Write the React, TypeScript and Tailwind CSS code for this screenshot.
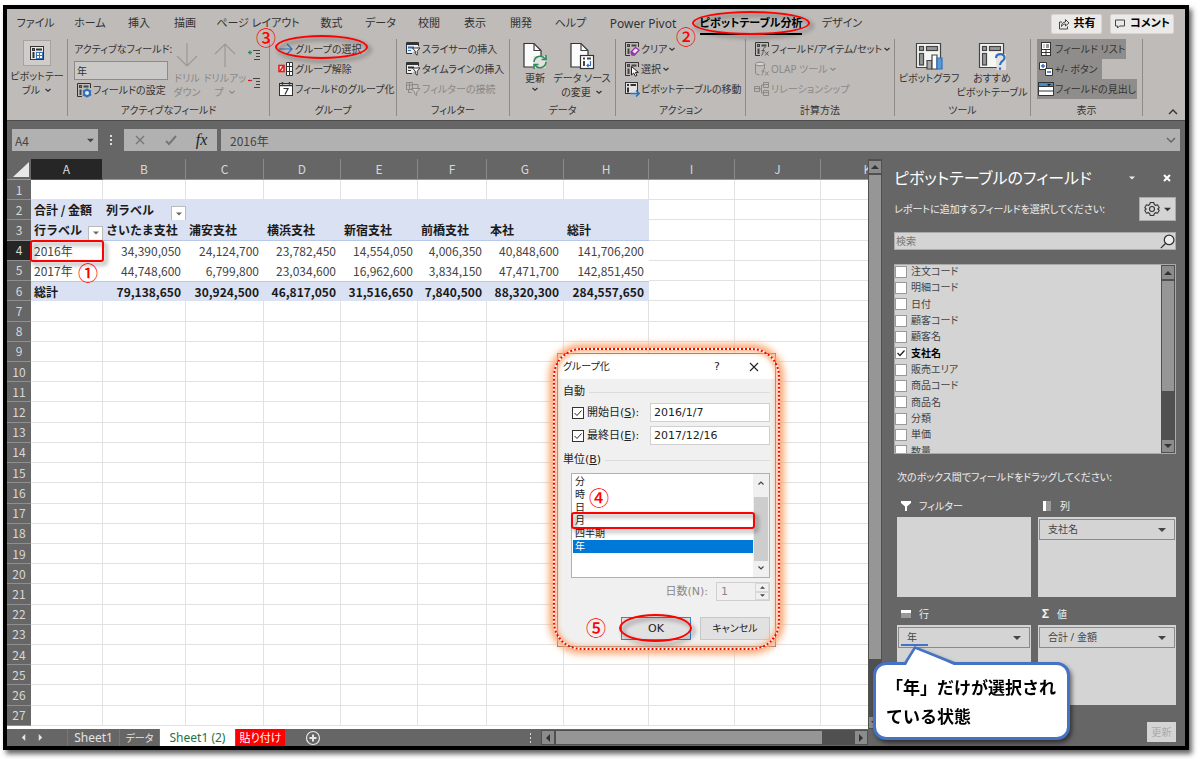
import type { ReactNode } from "react";

const UI = "font-['Noto_Sans','Noto_Sans_CJK_JP',sans-serif] [font-feature-settings:'palt']";
const CJK = "font-['Noto_Sans_CJK_JP',sans-serif] [font-feature-settings:normal]";

/* ---------- small drawings ---------- */

function Chevron({ className = "" }: { className?: string }) {
  return (
    <svg viewBox="0 0 8 8" className={`inline-block h-2 w-2 shrink-0 ${className}`} fill="none" stroke="currentColor" strokeWidth="1.2">
      <path d="M1.5 3 4 5.3 6.5 3" />
    </svg>
  );
}

function Tri({ dir = "down", className = "h-2 w-2" }: { dir?: "down" | "up" | "left" | "right"; className?: string }) {
  const d = { down: "M0 2h8L4 6z", up: "M0 6h8L4 2z", left: "M6 0v8L2 4z", right: "M2 0v8l4-4z" }[dir];
  return (
    <svg viewBox="0 0 8 8" className={`shrink-0 ${className}`} fill="currentColor">
      <path d={d} />
    </svg>
  );
}

function Ico({ children, className = "h-4 w-4" }: { children: ReactNode; className?: string }) {
  return (
    <svg viewBox="0 0 16 16" className={`shrink-0 ${className}`} fill="none" stroke="#333" strokeWidth="1">
      {children}
    </svg>
  );
}

const tableBase = (
  <>
    <path d="M14.5 6V1.5h-13v13H6" fill="none" />
    <rect x="3.5" y="3.5" width="2" height="2" fill="#777" stroke="#444" />
    <path d="M7.5 4.5h5" stroke="#444" strokeWidth="2" />
    <path d="M4.5 7.5v5.5" stroke="#444" strokeWidth="2" />
  </>
);

const IconPivot = ({ className }: { className?: string }) => (
  <Ico className={className}>
    <rect x="1.5" y="1.5" width="13" height="13" fill="#e8e8e8" />
    <rect x="3.5" y="3.5" width="2" height="2" fill="#777" />
    <path d="M7 4.5h6" strokeWidth="2" />
    <path d="M4.5 7v6" strokeWidth="2" />
    <rect x="7.5" y="7.5" width="6" height="6" fill="#fff" stroke="#3a74b8" />
    <path d="M7.5 10.5h6M10.5 7.5v6" stroke="#3a74b8" />
  </Ico>
);
const IconSettings = () => (
  <Ico>
    {tableBase}
    <circle cx="11" cy="11" r="3" stroke="#2f6fbd" strokeWidth="2" fill="#dfe9f5" />
    <path d="M11 6.5v2M11 13.5v2M6.8 8.7l1.8 1M13.4 12.3l1.8 1M6.8 13.3l1.8-1M13.4 9.7l1.8-1" stroke="#2f6fbd" strokeWidth="1.4" />
  </Ico>
);
const IconArrowRight = () => (
  <Ico>
    <path d="M1 8h13M9 3l5 5-5 5" stroke="#2f6fbd" strokeWidth="1.2" />
  </Ico>
);
const IconUngroup = () => (
  <Ico>
    <rect x="1" y="4.5" width="5" height="6" fill="#fff" stroke="#e02020" strokeWidth="1.6" />
    <path d="M2 10 5.500 5" stroke="#e02020" strokeWidth="1.6" />
    <path d="M8.500 1.500h6v13h-6z" fill="#fff" />
    <path d="M8.500 5.500h6M8.500 10.500h6M11.500 1.500v13" />
  </Ico>
);
const IconCalendar = () => (
  <Ico>
    <rect x="1.5" y="2.5" width="13" height="12" fill="#fff" />
    <path d="M1.5 4.5h13M4.5 1v2.5M11.5 1v2.5" strokeWidth="1.4" />
    <path d="M5.5 7.5h4.5l-3 6" strokeWidth="1.2" />
  </Ico>
);
const IconSlicer = ({ blue = false }: { blue?: boolean }) => (
  <Ico>
    <path d="M13.5 5V1.5h-12v11H7" fill="#eee" />
    <path d="M1.5 3h12" strokeWidth="2" />
    <path d="M3 6.5h6" stroke={blue ? "#2f6fbd" : "#333"} strokeWidth="2" />
    <path d="M3 9.5h3" stroke={blue ? "#2f6fbd" : "#333"} />
    <path d="M7.5 7h7.5l-2.8 3.2v4l-1.9-1.4v-2.6z" fill="#fff" />
  </Ico>
);
const IconFilterLink = () => (
  <Ico>
    <g stroke="#8b8886">
      <path d="M1.500 1.500h6v7h-6zM1.500 4h6M4.500 1.500v7M7.500 3.500h5.500v4" />
      <path d="M3.500 8.500v3h3" />
      <path d="M6.500 7.500h8.500l-3.300 3.500v3.500l-2-1.400V11z" fill="#cbc8c5" />
    </g>
  </Ico>
);
const IconDoc = ({ kind }: { kind: "refresh" | "source" }) => (
  <svg viewBox="0 0 28 28" className="h-7 w-7" fill="none" stroke="#444" strokeWidth="1.2">
    <path d="M3 1.5h10l7 7V25H3z" fill="#fbfbfb" stroke="#333" />
    <path d="M13 1.5v7h7" />
    {kind === "refresh" ? (
      <g stroke="#2e8b57" strokeWidth="1.6">
        <rect x="12.5" y="14" width="12" height="12" fill="#e4e2e0" stroke="none" />
        <path d="M13 20a6 6 0 0 1 11-3M25 20a6 6 0 0 1-11 3" />
        <path d="M25 13v4.5h-4.5M13 27v-4.5h4.5" />
      </g>
    ) : (
      <g>
        <rect x="12.5" y="13.5" width="13" height="13" fill="#fff" stroke="#333" />
        <path d="M15 16.5h2M19 16.5h4M16 19v5" strokeWidth="2" />
        <path d="M22.5 19v4.5H19M20.5 21.8 19 23.5l1.5 1.7" stroke="#2f6fbd" />
      </g>
    )}
  </svg>
);
const IconClear = () => (
  <Ico>
    {tableBase}
    <path d="m7 11 4.5-4.5L15 9l-4.5 5H8z" fill="#f3e6f7" stroke="#9030a8" strokeWidth="1.3" />
    <path d="m7.5 11 3 2.5" stroke="#9030a8" strokeWidth="2" />
  </Ico>
);
const IconSelect = () => (
  <Ico>
    {tableBase}
    <path d="M7.5 5.5v8.5l2.2-2 1.6 3.2 1.6-.8-1.5-3h3z" fill="#fff" stroke="#222" />
  </Ico>
);
const IconMove = () => (
  <Ico>
    <rect x="1.500" y="1.500" width="12" height="11" fill="#e4e4e4" />
    <path d="M3 4h2M6.500 4h5.500M4 6.500v5" strokeWidth="2" />
    <path d="M6 12.500h9M12 9.500l3 3-3 3" stroke="#2f6fbd" strokeWidth="1.600" />
  </Ico>
);
const IconFieldFx = () => (
  <Ico>
    {tableBase}
    <path d="M11.500 6.500c-2-.5-1.800 1.500-2.300 4s-.7 4-2 3.700M7.500 9.500h3.200M11 10.500l3.500 4M14.500 10.500l-3.500 4" stroke="#555" />
  </Ico>
);
const IconOlap = () => (
  <Ico>
    <g stroke="#8b8886">
      <ellipse cx="6" cy="3" rx="4.500" ry="1.800" fill="#d8d5d2" />
      <path d="M1.500 3v9c0 1 2 1.800 4 1.800M10.500 3v4" />
      <path d="M11 7.500c-2-.3-1.500 1.500-2 3.500s-.8 3.500-2 3.200M7.500 10h3M11 10.500l3.500 4M14.500 10.500l-3.500 4" />
    </g>
  </Ico>
);
const IconRelation = () => (
  <Ico>
    <path d="M.500 5.500h5v5h-5zM9.500 1.500h5v5h-5zM9.500 9.500h5v5h-5zM5.500 8h2V4h2M7.500 8v4h2M.5 7.500h5M9.500 3.500h5M9.500 11.500h5" stroke="#8b8886" />
  </Ico>
);
const IconChart = ({ kind }: { kind: "bars" | "question" }) => (
  <svg viewBox="0 0 28 28" className="h-7 w-7" fill="none" stroke="#444" strokeWidth="1.2">
    <path d="M1.500 1.500h24v24h-24z" fill="#f4f6f4" />
    <rect x="4.500" y="4.500" width="4" height="4" fill="#999" />
    <rect x="11.500" y="4.500" width="11" height="4" fill="#999" />
    <rect x="4.500" y="11.500" width="4" height="11.500" fill="#999" />
    {kind === "bars" ? (
      <g>
        <path d="M12 18.500h5V27h-5z" fill="#aaa" />
        <path d="M17 13h5v14h-5z" fill="#fff" />
        <path d="M22 16h5v11h-5z" fill="#5b9bd5" stroke="#2f6fbd" />
      </g>
    ) : (
      <g>
        <path d="M17 12h11v16H19z" fill="#e4e2e0" stroke="none" />
        <path d="M18 16c0-5.500 9-5 8.500 0-.3 3.500-4.500 3-4.500 7M22 25.500v2.300" stroke="#2f6fbd" strokeWidth="2.200" />
      </g>
    )}
  </svg>
);
const IconFieldList = () => (
  <Ico>
    <rect x="3.500" y="1.500" width="9" height="13" fill="#fff" />
    <path d="M5.500 4h1M8 4h3M5.500 6h1M8 6h3M3.500 8.500h9M3.500 11.500h9M8 8.500v6" />
  </Ico>
);
const IconPlusMinus = () => (
  <Ico>
    <path d="M1.500 1.500h7v7h-7z" fill="#fff" />
    <path d="M7.500 7.500h7v7h-7z" fill="#fff" />
    <path d="M3 5h4M5 3v4M9 11h4" stroke="#2f6fbd" strokeWidth="1.400" />
  </Ico>
);
const IconHeaders = () => (
  <Ico>
    <path d="M.500 1.500h15v13H.5z" fill="#fff" />
    <path d="M.500 1.500h15v4H.5z" fill="#3f8ed0" />
    <path d="M.500 10h15" />
    <path d="M9 3h4l-2 2z" fill="#111" stroke="none" />
  </Ico>
);
const IconLevel = ({ plus }: { plus?: boolean }) => (
  <Ico>
    <path d={plus ? "M1 5.500h4M3 3.500v4" : "M1 5.500h4"} stroke={plus ? "#2e8b57" : "#d02020"} strokeWidth="1.300" />
    <path d="M6 3.500h7M9 6.500h4M9 9.500h4M7 12.500h6" stroke="#444" />
  </Ico>
);
const IconDrill = ({ up }: { up?: boolean }) => (
  <svg viewBox="0 0 24 26" className="mb-0.5 h-[26px] w-6" fill="none" stroke="#9b9895" strokeWidth="1.200">
    <path d={up ? "M12 25V2M2 12 12 2l10 10" : "M12 1v23M2 14l10 10 10-10"} />
  </svg>
);

/* ---------- annotations ---------- */

function Num({ n, className }: { n: string; className: string }) {
  return <span className={`pointer-events-none absolute z-20 text-[20px] leading-5 font-medium text-[#f00] ${CJK} ${className}`}>{n}</span>;
}
function Ring({ className }: { className: string }) {
  return <span className={`pointer-events-none absolute z-10 border-2 border-[#f00] drop-shadow-[3px_3px_2px_rgba(0,0,0,0.45)] ${className}`} />;
}

/* ---------- ribbon ---------- */

const tabs: [string, string][] = [
  ["ファイル", "w-[57px]"],
  ["ホーム", "w-[52px]"],
  ["挿入", "w-[46px]"],
  ["描画", "w-[46px]"],
  ["ページ レイアウト", "w-[100px]"],
  ["数式", "w-[47px]"],
  ["データ", "w-[51px]"],
  ["校閲", "w-[46px]"],
  ["表示", "w-[46px]"],
  ["開発", "w-[46px]"],
  ["ヘルプ", "w-[53px]"],
  ["Power Pivot", "w-[92px] text-[12px]"],
  ["ピボットテーブル分析", "w-[124px]"],
  ["デザイン", "w-[58px]"],
];

function TabBar() {
  return (
    <nav className="flex h-[29px] items-center text-[11px]">
      {tabs.map(([t, w]) => {
        const active = t === "ピボットテーブル分析";
        return (
          <button key={t} className={`relative flex h-full shrink-0 items-center justify-center whitespace-nowrap ${w} ${active ? "font-bold text-black" : ""}`}>
            {active ? <span className="border-b-2 border-black leading-5">{t}</span> : t}
            {active && <Ring className="inset-x-[3px] top-[2px] h-6 rounded-[50%]" />}
            {active && <Num n="②" className="top-[18px] -left-[13px]" />}
          </button>
        );
      })}
      <div className="ml-auto flex gap-2 pr-[11px] font-bold text-black">
        <button className="flex h-5 w-[51px] items-center justify-center gap-1 rounded-xs border border-[#d8d5d2] bg-[#eceae8]">
          <svg viewBox="0 0 12 12" className="h-3 w-3" fill="none" stroke="#444">
            <path d="M4 4H1.500v7h8V8.500M3.500 8.500c0-3 1.500-4.500 4-4.500V1.500L11 5 7.500 8V6c-2 0-3 .5-4 2.500z" />
          </svg>
          共有
        </button>
        <button className="flex h-5 w-[64px] items-center justify-center gap-1 rounded-xs border border-[#d8d5d2] bg-[#eceae8]">
          <svg viewBox="0 0 12 12" className="h-3 w-3" fill="none" stroke="#444">
            <path d="M1.500 2h9v6H5.500L3.500 10V8h-2z" />
          </svg>
          コメント
        </button>
      </div>
    </nav>
  );
}

function Group({ label, width, children }: { label: string; width: string; children: ReactNode }) {
  return (
    <section className={`flex shrink-0 flex-col border-r border-[#8d8a88] ${width}`}>
      <div className="flex h-[65px]">{children}</div>
      <div className="flex h-3 items-center justify-center">{label}</div>
    </section>
  );
}

function Cmd({ icon, children, off, drop, className = "" }: { icon: ReactNode; children: ReactNode; off?: boolean; drop?: boolean; className?: string }) {
  return (
    <button className={`flex h-5 shrink-0 items-center gap-px whitespace-nowrap ${off ? "text-[#8b8886]" : ""} ${className}`}>
      {icon}
      <span>{children}</span>
      {drop && <Chevron />}
    </button>
  );
}

function Big({ icon, l1, l2, drop, off, width }: { icon: ReactNode; l1: string; l2?: string; drop?: boolean; off?: boolean; width: string }) {
  return (
    <button className={`flex flex-col items-center whitespace-nowrap ${width} ${off ? "text-[#8b8886]" : ""}`}>
      <span className="flex h-[31px] items-end">{icon}</span>
      <span className="mt-px leading-[14px]">{l1}</span>
      <span className="flex items-center gap-1 leading-[14px]">
        {l2}
        {drop && <Chevron />}
      </span>
    </button>
  );
}

function Ribbon() {
  return (
    <div className="relative flex h-[82px] pt-px pb-1 text-[10px] leading-[14px]">
      <Group label="" width="w-[61px]">
        <button className="flex w-full flex-col items-center pt-px">
          <span className="flex h-[26px] w-7 items-center justify-center border border-[#a5a2a0] bg-[#cfccca]">
            <IconPivot />
          </span>
          <span className="mt-[3px]">ピボットテー</span>
          <span className="flex items-center gap-1">
            ブル <Chevron />
          </span>
        </button>
      </Group>
      <Group label="アクティブなフィールド" width="w-[202px]">
        <div className="flex w-[103px] flex-col pl-1.5">
          <label htmlFor="active-field" className="flex h-5 items-center whitespace-nowrap">
            アクティブなフィールド:
          </label>
          <input id="active-field" defaultValue="年" className="mt-0.5 h-[19px] w-[94px] border border-[#8d8a88] bg-[#cbc9c7] px-0.5" />
          <Cmd icon={<IconSettings />} className="ml-0.5">
            フィールドの設定
          </Cmd>
        </div>
        <Big off width="w-[32px]" icon={<IconDrill />} l1="ドリル" l2="ダウン" />
        <Big off drop width="w-[44px]" icon={<IconDrill up />} l1="ドリルアッ" l2="プ" />
        <div className="flex flex-col gap-3 pt-2">
          <button aria-label="フィールドの展開"><IconLevel plus /></button>
          <button aria-label="フィールドの折りたたみ"><IconLevel /></button>
        </div>
      </Group>
      <Group label="グループ" width="w-[127px]">
        <div className="relative flex flex-col pl-2">
          <Cmd icon={<IconArrowRight />}>グループの選択</Cmd>
          <Cmd icon={<IconUngroup />}>グループ解除</Cmd>
          <Cmd icon={<IconCalendar />}>フィールドのグループ化</Cmd>
          <Ring className="-top-[4px] left-[5px] h-6 w-[93px] rounded-[50%]" />
          <Num n="③" className="-top-[11px] -left-[14px]" />
        </div>
      </Group>
      <Group label="フィルター" width="w-[113px]">
        <div className="flex flex-col pl-2">
          <Cmd icon={<IconSlicer blue />}>スライサーの挿入</Cmd>
          <Cmd icon={<IconSlicer />}>タイムラインの挿入</Cmd>
          <Cmd off icon={<IconFilterLink />}>フィルターの接続</Cmd>
        </div>
      </Group>
      <Group label="データ" width="w-[106px]">
        <Big drop width="w-[50px]" icon={<IconDoc kind="refresh" />} l1="更新" />
        <Big drop width="w-[44px]" icon={<IconDoc kind="source" />} l1="データ ソース" l2="の変更" />
      </Group>
      <Group label="アクション" width="w-[130px]">
        <div className="flex flex-col pl-2">
          <Cmd drop icon={<IconClear />}>クリア</Cmd>
          <Cmd drop icon={<IconSelect />}>選択</Cmd>
          <Cmd icon={<IconMove />}>ピボットテーブルの移動</Cmd>
        </div>
      </Group>
      <Group label="計算方法" width="w-[149px]">
        <div className="flex flex-col pl-2">
          <Cmd drop icon={<IconFieldFx />}>フィールド/アイテム/セット</Cmd>
          <Cmd off drop icon={<IconOlap />}>OLAP ツール</Cmd>
          <Cmd off icon={<IconRelation />}>リレーションシップ</Cmd>
        </div>
      </Group>
      <Group label="ツール" width="w-[136px]">
        <Big width="w-[68px]" icon={<IconChart kind="bars" />} l1="ピボットグラフ" />
        <Big width="w-[58px]" icon={<IconChart kind="question" />} l1="おすすめ" l2="ピボットテーブル" />
      </Group>
      <Group label="表示" width="w-[112px]">
        <div className="flex flex-col items-start pl-1.5">
          <Cmd className="bg-[#8f8d8b] pr-px pl-px" icon={<IconFieldList />}>フィールド リスト</Cmd>
          <Cmd className="bg-[#8f8d8b] pr-1 pl-px" icon={<IconPlusMinus />}>+/- ボタン</Cmd>
          <Cmd className="bg-[#8f8d8b] pr-px pl-px" icon={<IconHeaders />}>フィールドの見出し</Cmd>
        </div>
      </Group>
      <div className="flex flex-1 items-end justify-end pr-1.5">
        <button aria-label="リボンを折りたたむ">
          <svg viewBox="0 0 12 8" className="h-2 w-3" fill="none" stroke="#333" strokeWidth="1.400">
            <path d="m2 6 4-4 4 4" />
          </svg>
        </button>
      </div>
    </div>
  );
}

function FormulaBar() {
  return (
    <div className={`flex h-[38px] items-center bg-[#666] pr-[5px] pl-[5px] text-[12px] text-[#444] ${CJK}`}>
      <div className="flex h-[22px] w-[86px] items-center bg-[#b1b1b1] pr-1">
        <input aria-label="名前ボックス" defaultValue="A4" className="h-full w-full min-w-0 bg-transparent pl-[3px]" />
        <button aria-label="名前の一覧"><Tri className="h-[7px] w-[7px]" /></button>
      </div>
      <svg viewBox="0 0 4 12" className="mx-[11px] h-3 w-1" fill="#ddd">
        <path d="M1 1h2v2H1zM1 5h2v2H1zM1 9h2v2H1z" />
      </svg>
      <div className="flex h-[22px] w-[93px] items-center justify-around bg-[#b1b1b1]">
        <button aria-label="キャンセル">
          <svg viewBox="0 0 12 12" className="h-3 w-3" stroke="#777" strokeWidth="1.400"><path d="m2 2 8 8M10 2l-8 8" /></svg>
        </button>
        <button aria-label="入力">
          <svg viewBox="0 0 12 12" className="h-3 w-3" fill="none" stroke="#777" strokeWidth="2"><path d="m1 7 3 3 7-8" /></svg>
        </button>
        <button className="font-['Liberation_Serif',serif] text-[16px] text-[#222] italic">fx</button>
      </div>
      <div className="ml-1 flex h-[22px] flex-1 items-center bg-[#b1b1b1] pr-1">
        <input aria-label="数式バー" defaultValue="2016年" className="h-full flex-1 bg-transparent pl-[9px]" />
        <svg viewBox="0 0 10 8" className="h-2 w-2.5" fill="none" stroke="#666" strokeWidth="1.500"><path d="m1 2 4 4 4-4" /></svg>
      </div>
    </div>
  );
}

/* ---------- sheet ---------- */

const cols: [string, string][] = [
  ["A", "w-[72px]"],
  ["B", "w-[83px]"],
  ["C", "w-[78px]"],
  ["D", "w-[77px]"],
  ["E", "w-[77px]"],
  ["F", "w-[69px]"],
  ["G", "w-[77px]"],
  ["H", "w-[85px]"],
  ["I", "w-[86px]"],
  ["J", "w-[86px]"],
  ["K", "w-[94px]"],
];

const data: Record<number, string[]> = {
  2: ["合計 / 金額", "列ラベル"],
  3: ["行ラベル", "さいたま支社", "浦安支社", "横浜支社", "新宿支社", "前橋支社", "本社", "総計"],
  4: ["2016年", "34,390,050", "24,124,700", "23,782,450", "14,554,050", "4,006,350", "40,848,600", "141,706,200"],
  5: ["2017年", "44,748,600", "6,799,800", "23,034,600", "16,962,600", "3,834,150", "47,471,700", "142,851,450"],
  6: ["総計", "79,138,650", "30,924,500", "46,817,050", "31,516,650", "7,840,500", "88,320,300", "284,557,650"],
};

function Cell({ row, col }: { row: number; col: number }) {
  const pivot = row >= 2 && row <= 6 && col < 8;
  const text = pivot ? (data[row][col] ?? "") : "";
  const head = row === 2 || row === 3 || row === 6;
  const numeric = row >= 4 && col > 0;
  const filter = (row === 2 && col === 1) || (row === 3 && col === 0);
  const edge = !pivot
    ? "border-r border-b border-[#e2e2e2]"
    : head
      ? `bg-[#d9e1f2] font-bold text-[#1a1a1a] ${row === 3 ? "border-b border-[#b9c9e8]" : ""} ${row === 6 ? "border-t border-[#b9c9e8]" : ""}`
      : "text-[#444]";
  return (
    <td className={`relative p-0 whitespace-nowrap ${edge}`}>
      {pivot && (
        <div className={`flex items-center leading-[18px] ${numeric ? "justify-end pr-[5px]" : "pl-[3px]"}`}>
          {text}
          {filter && (
            <button aria-label="フィルター" className="absolute right-0 -bottom-px flex h-[15px] w-[15px] items-center justify-center border border-[#bbb] bg-white text-[#666]">
              <Tri className="h-[6px] w-[6px]" />
            </button>
          )}
        </div>
      )}
      {row === 4 && col === 0 && <Ring className="-inset-x-px -inset-y-px rounded-[3px]" />}
      {row === 5 && col === 0 && <Num n="①" className="top-[2px] left-[47px]" />}
    </td>
  );
}

function Sheet() {
  return (
    <div className={`min-w-0 flex-1 overflow-hidden bg-white ${CJK}`}>
      <table className="h-[567px] w-[908px] table-fixed border-separate border-spacing-0 text-[12px]">
        <thead>
          <tr className="h-[21px] bg-[#666] text-[#d8d8d8]">
            <th className="w-6 border-b border-[#999] p-0">
              <svg viewBox="0 0 24 20" className="h-5 w-6"><path d="M22 3v15H6z" fill="#e8e8e8" /></svg>
            </th>
            {cols.map(([c, w]) => (
              <th key={c} className={`border-r border-b p-0 font-normal ${w} ${c === "A" ? "border-r-[#666] border-b-[#217346] bg-[#262626]" : "border-r-[#8a8a8a] border-b-[#999]"}`}>
                {c}
              </th>
            ))}
          </tr>
        </thead>
        <tbody>
          {Array.from({ length: 27 }, (_, i) => i + 1).map((r) => (
            <tr key={r}>
              <th className={`border-b border-[#8f8f8f] p-0 leading-[18px] font-normal text-[#d8d8d8] ${r === 4 ? "bg-[#262626]" : "bg-[#666]"}`}>{r}</th>
              {cols.map(([c], i) => (
                <Cell key={c} row={r} col={i} />
              ))}
            </tr>
          ))}
        </tbody>
      </table>
    </div>
  );
}

const scrollBtn = "flex shrink-0 items-center justify-center border border-[#505050] bg-[#8c8c8c] text-[#333]";

function SheetTabs() {
  return (
    <div className="flex h-[17px] shrink-0 items-center bg-[#666] text-[12px] leading-4 text-[#e4e4e4]">
      <button aria-label="前のシート" className="ml-[13px]"><Tri dir="left" className="h-[7px] w-[7px]" /></button>
      <button aria-label="次のシート" className="ml-2.5"><Tri dir="right" className="h-[7px] w-[7px]" /></button>
      <button className="ml-[23px] h-full w-[53px] border-x border-[#777]">Sheet1</button>
      <button className="h-full w-10 border-r border-[#777] text-[10px]">データ</button>
      <button className="h-full w-[75px] bg-white text-[#217346]">Sheet1 (2)</button>
      <button className="ml-px h-full w-[49px] bg-[#f00] text-[11px] text-white">貼り付け</button>
      <button aria-label="新しいシート" className="ml-5">
        <svg viewBox="0 0 16 16" className="h-4 w-4" fill="none" stroke="#e8e8e8" strokeWidth="1.200">
          <circle cx="8" cy="8" r="6.500" />
          <path d="M8 4.500v7M4.500 8h7" strokeWidth="2" />
        </svg>
      </button>
      <svg viewBox="0 0 4 12" className="mr-2 ml-auto h-3 w-1" fill="#ddd">
        <path d="M1 1h1v2H1zM1 5h1v2H1zM1 9h1v2H1z" />
      </svg>
      <div className="mr-[14px] flex h-[15px] w-[327px] bg-[#505050]">
        <button aria-label="左へ" className={`w-[14px] ${scrollBtn}`}><Tri dir="left" /></button>
        <div className="w-[268px] border border-[#505050] bg-[#969696]" />
        <button aria-label="右へ" className={`ml-auto w-[14px] ${scrollBtn}`}><Tri dir="right" /></button>
      </div>
    </div>
  );
}

/* ---------- grouping dialog ---------- */

function DialogScroll() {
  return (
    <div className="flex w-4 flex-col items-center bg-[#f0f0f0] py-[3px]">
      <svg viewBox="0 0 8 8" className="h-3 w-2" fill="none" stroke="#444" strokeWidth="1.200"><path d="m1.500 5.500 2.500-2.500 2.500 2.500" /></svg>
      <div className="mt-2 h-[64px] w-[14px] bg-[#cdcdcd]" />
      <svg viewBox="0 0 8 8" className="mt-auto h-3 w-2" fill="none" stroke="#444" strokeWidth="1.200"><path d="m1.500 2.500 2.500 2.500 2.500-2.500" /></svg>
    </div>
  );
}

const dateRows: [string, string, string, string][] = [
  ["start", "開始日", "S", "2016/1/7"],
  ["end", "最終日", "E", "2017/12/16"],
];

function GroupDialog() {
  return (
    <div role="dialog" aria-label="グループ化" className="absolute top-[194px] left-[550px] z-10 w-[219px] border border-[#777] bg-[#f0f0f0] font-['DejaVu_Sans','Noto_Sans_CJK_JP',sans-serif] text-[11px] leading-[14px] text-[#222]">
      <div className="flex h-[25px] items-center bg-white pl-[5px]">
        <span className="flex-1 text-[10px] [font-feature-settings:'palt']">グループ化</span>
        <button className="w-8">?</button>
        <button aria-label="閉じる" className="flex w-[42px] justify-center">
          <svg viewBox="0 0 10 10" className="h-2.5 w-2.5" stroke="#222" strokeWidth="1.100"><path d="m1 1 8 8M9 1 1 9" /></svg>
        </button>
      </div>
      <div className="flex flex-col px-[5px] pt-[6px] pb-1.5">
        <div className="flex h-[14px] items-center gap-1">自動<span className="h-px flex-1 bg-[#dcdcdc]" /></div>
        <div className="mt-1 flex flex-col gap-1">
          {dateRows.map(([id, label, key, value]) => (
            <div key={id} className="flex h-[19px] items-center pl-[9px]">
              <span className="relative mr-[3px] flex h-3 w-3">
                <input id={`${id}-on`} type="checkbox" defaultChecked className="peer h-3 w-3 appearance-none border border-[#333] bg-white" />
                <svg viewBox="0 0 12 12" className="pointer-events-none absolute inset-0 hidden h-3 w-3 peer-checked:block" fill="none" stroke="#222"><path d="m2.500 6 2.500 2.500L9.500 3.500" /></svg>
              </span>
              <label htmlFor={`${id}-on`} className="whitespace-nowrap">
                {label}(<u>{key}</u>):
              </label>
              <input aria-label={label} defaultValue={value} className="ml-auto h-[19px] w-[120px] border border-[#d0d0d0] bg-white pl-[3px]" />
            </div>
          ))}
        </div>
        <div className="mt-2 flex h-[14px] items-center gap-1"><span>単位(<u>B</u>)</span><span className="h-px flex-1 bg-[#dcdcdc]" /></div>
        <div className="mt-1.5 ml-2 flex h-[105px] border border-[#b0b0b0] bg-white">
          <ul role="listbox" className="flex-1 pt-px pl-px text-[10px] leading-[13px]">
            {["分", "時", "日", "月", "四半期", "年"].map((u) => (
              <li key={u} role="option" aria-selected={u === "年"} className={`relative h-[13px] pl-0.5 ${u === "年" ? "bg-[#0078d7] text-white" : ""}`}>
                {u}
                {u === "日" && <Num n="④" className="-top-[13px] left-[16px]" />}
                {u === "月" && <Ring className="-inset-x-[2px] -inset-y-[2px] rounded-[3px]" />}
              </li>
            ))}
          </ul>
          <DialogScroll />
        </div>
        <div className="mt-1 flex h-[19px] items-center justify-end text-[#888]">
          <label htmlFor="days">日数(N):</label>
          <div className="ml-2 flex h-[19px] w-[54px] border border-[#d0d0d0]">
            <input id="days" disabled defaultValue="1" className="w-0 flex-1 bg-transparent pl-1" />
            <div className="flex w-[14px] flex-col text-[#444]">
              <button aria-label="増やす" className="flex flex-1 items-center justify-center border border-[#d8d8d8]"><Tri dir="up" className="h-[5px] w-[5px]" /></button>
              <button aria-label="減らす" className="flex flex-1 items-center justify-center border border-[#d8d8d8]"><Tri className="h-[5px] w-[5px]" /></button>
            </div>
          </div>
        </div>
        <div className="mt-4 flex h-[23px] justify-end gap-[9px]">
          <button className="relative w-[70px] border border-[#3a86cf] bg-[#e1e1e1]">
            OK
            <Ring className="-top-[4px] -left-[3px] h-7 w-[73px] rounded-[50%]" />
            <Num n="⑤" className="top-0 -left-[36px]" />
          </button>
          <button className="w-[70px] border border-[#c8c8c8] bg-[#e1e1e1] text-[10px] [font-feature-settings:'palt']">キャンセル</button>
        </div>
      </div>
      <span className="pointer-events-none absolute -inset-x-[5px] -top-[6px] -bottom-[4px] rounded-[28px] border-2 border-dotted border-[#f00] shadow-[0_0_7px_4px_#f9a873,inset_0_0_5px_2px_#fbb27c]" />
    </div>
  );
}

/* ---------- field panel ---------- */

const fields = ["注文コード", "明細コード", "日付", "顧客コード", "顧客名", "支社名", "販売エリア", "商品コード", "商品名", "分類", "単価", "数量"];

function Area({ title, icon, field, mark }: { title: string; icon: ReactNode; field?: string; mark?: boolean }) {
  return (
    <section>
      <h3 className="flex h-[22px] items-center gap-2 pl-1">
        {icon}
        {title}
      </h3>
      <div className="h-20 bg-[#d4d4d4] p-px pt-0.5">
        {field && (
          <button className="relative flex h-[21px] w-full items-center justify-between border border-[#8a8a8a] pr-2 pl-2 text-[#444]">
            {field}
            <Tri />
            {mark && <span className="absolute bottom-px left-0.5 h-0.5 w-[27px] bg-[#4472c4]" />}
          </button>
        )}
      </div>
    </section>
  );
}

function Callout() {
  return (
    <div className="absolute top-[503px] -left-[9px] z-30 w-[197px] drop-shadow-[2px_3px_2px_rgba(0,0,0,0.5)]">
      <p className={`rounded-[13px] border-[3px] border-[#4472c4] bg-white py-[7px] pl-[10px] text-[17px] leading-[29px] font-bold whitespace-nowrap text-black ${CJK}`}>
        「年」だけが選択され
        <br />
        ている状態
      </p>
      <svg viewBox="0 0 60 20" className="absolute -top-4 left-[28px] h-5 w-[60px]">
        <path d="M5 19 14 2l39 17z" fill="#fff" />
        <path d="M4 17.500 14 1.500l40 16" fill="none" stroke="#4472c4" strokeWidth="2.500" />
      </svg>
    </div>
  );
}

function FieldPanel() {
  return (
    <aside className="relative w-[303px] shrink-0 bg-[#666] pr-[9px] pl-3 text-[10px] text-[#eee]">
      <div className="flex h-[37px] items-center">
        <h2 className="flex-1 text-[16px] whitespace-nowrap text-white">ピボットテーブルのフィールド</h2>
        <button aria-label="オプション"><Tri className="h-[6px] w-[6px]" /></button>
        <button aria-label="閉じる" className="mr-1 ml-[27px]">
          <svg viewBox="0 0 10 10" className="h-2.5 w-2.5" stroke="#fff" strokeWidth="2"><path d="m2 2 6 6M8 2 2 8" /></svg>
        </button>
      </div>
      <div className="mt-px flex h-6 items-center justify-between">
        <p className="whitespace-nowrap">レポートに追加するフィールドを選択してください:</p>
        <button aria-label="ツール" className="flex h-6 w-[37px] items-center justify-center gap-1 border border-[#aaa] bg-[#d4d4d4] text-[#333]">
          <svg viewBox="0 0 16 16" className="h-4 w-4" fill="none" stroke="#333" strokeWidth="1.100">
            <path d="M6.300 1.500h3.400l.6 2 1.300.8 2-.5 1.600 2.800L13.800 8l1.400 1.400-1.600 2.800-2-.5-1.300.8-.6 2H6.300l-.6-2-1.300-.8-2 .5L.8 9.400 2.200 8 .8 6.600l1.600-2.800 2 .5 1.300-.8z" />
            <circle cx="8" cy="8" r="2.500" />
          </svg>
          <Tri className="h-[7px] w-[7px]" />
        </button>
      </div>
      <div className="mt-[11px] flex h-[18px] items-center border border-[#aaa] bg-[#d4d4d4]">
        <input aria-label="検索" placeholder="検索" className="h-full flex-1 bg-transparent pl-px placeholder:text-[#777]" />
        <svg viewBox="0 0 14 14" className="h-[15px] w-[15px]" fill="none" stroke="#333" strokeWidth="1.200"><circle cx="8.500" cy="5.500" r="4.500" fill="#eee" /><path d="M5.300 8.700.8 13.200" /></svg>
      </div>
      <div className="mt-[14px] flex h-[190px] overflow-hidden border border-[#aaa] bg-[#d4d4d4]">
        <ul className="grid h-[196px] flex-1 auto-rows-fr text-[#444]">
          {fields.map((f) => (
            <li key={f}>
              <label className={`flex items-center gap-1 leading-[13px] ${f === "支社名" ? "font-bold text-black" : ""}`}>
                <span className="relative flex h-3 w-3">
                  <input type="checkbox" defaultChecked={f === "支社名"} className="peer h-3 w-3 appearance-none border border-[#999] bg-white" />
                  <svg viewBox="0 0 12 12" className="pointer-events-none absolute inset-0 hidden h-3 w-3 peer-checked:block" fill="none" stroke="#222" strokeWidth="1.300"><path d="m2.500 6 2.500 2.500L9.500 3.500" /></svg>
                </span>
                {f}
              </label>
            </li>
          ))}
        </ul>
        <div className="flex w-[14px] flex-col bg-[#505050]">
          <button aria-label="上へ" className={`h-[15px] ${scrollBtn}`}><Tri dir="up" /></button>
          <div className="h-[112px] border border-[#505050] bg-[#969696]" />
          <button aria-label="下へ" className={`mt-auto h-[14px] ${scrollBtn}`}><Tri /></button>
        </div>
      </div>
      <p className="mt-[15px] pl-[3px] leading-4">次のボックス間でフィールドをドラッグしてください:</p>
      <div className="mt-2.5 grid grid-cols-[135fr_139fr] gap-x-[7px] gap-y-[6px] pl-[3px]">
        <Area title="フィルター" icon={<svg viewBox="0 0 10 10" className="h-2.5 w-2.5" fill="#fff"><path d="M0 0h10v2L6 5.500V10H4V5.500L0 2z" /></svg>} />
        <Area title="列" field="支社名" icon={<svg viewBox="0 0 10 10" className="h-2.5 w-2.5"><path d="M1 0h3v10H1z" fill="#fff" /><path d="M4 0h5v10H4z" fill="#999" /></svg>} />
        <Area title="行" field="年" mark icon={<svg viewBox="0 0 10 10" className="h-2.5 w-2.5"><path d="M0 1h10v3H0z" fill="#fff" /><path d="M0 4h10v5H0z" fill="#999" /></svg>} />
        <Area title="値" field="合計 / 金額" icon={<span className="text-[12px] font-bold">Σ</span>} />
      </div>
      <div className="mt-[17px] flex justify-end">
        <button disabled className="h-5 w-[29px] bg-[#d4d4d4] text-[#aaa]">更新</button>
      </div>
      <Callout />
    </aside>
  );
}

export default function App() {
  return (
    <main className={`min-h-screen bg-white pt-[5px] pr-[11px] pb-[9px] pl-[3px] ${UI}`}>
      <div className="border-4 border-black bg-[#bfbbb8] text-[#333] shadow-[3px_4px_5px_rgba(0,0,0,0.6)]">
        <TabBar />
        <Ribbon />
        <div className="border-t border-[#4c4c4c]">
          <FormulaBar />
        </div>
        <div className="relative flex">
          <div className="flex min-w-0 flex-1 flex-col">
            <div className="flex h-[570px]">
              <Sheet />
              <div className="flex w-[14px] flex-col bg-[#505050] pt-px">
                <button aria-label="上へ" className={`h-[14px] ${scrollBtn}`}><Tri dir="up" /></button>
                <div className="h-[486px] border border-[#505050] bg-[#969696]" />
                <button aria-label="下へ" className={`mt-auto h-[13px] ${scrollBtn}`}><Tri /></button>
              </div>
            </div>
            <SheetTabs />
          </div>
          <FieldPanel />
          <GroupDialog />
        </div>
      </div>
    </main>
  );
}
